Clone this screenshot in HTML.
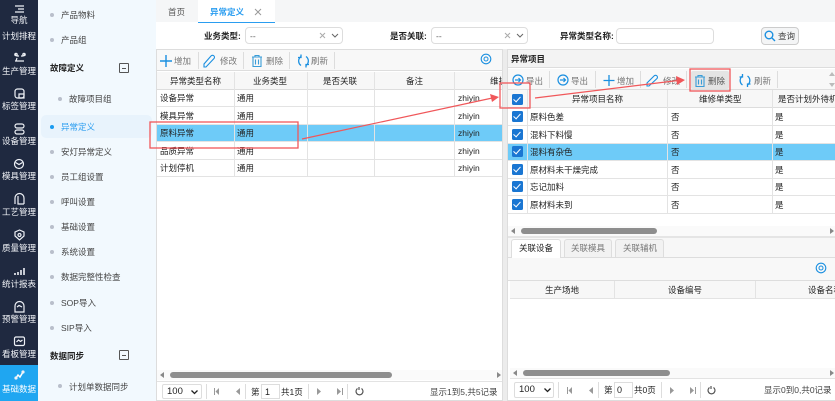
<!DOCTYPE html>
<html><head><meta charset="utf-8">
<style>
html,body{margin:0;padding:0;background:#fff}
#w{position:absolute;left:0;top:0;width:835px;height:401px;overflow:hidden;background:#fff;font-family:"Liberation Sans","Noto Sans CJK SC",sans-serif;font-size:8.5px;color:#222;filter:blur(.3px)}
body{width:835px;height:401px;overflow:hidden;position:relative}
#w div,#w span{position:absolute;white-space:nowrap;box-sizing:border-box}
svg{position:absolute;overflow:visible}
.t{line-height:12px;height:12px}
#w .nav{left:0;width:38px;text-align:center;color:#f2f4f8;font-size:8.5px;line-height:12px;height:12px}
.m{color:#444;font-size:8.5px;line-height:12px;height:12px}
.d{width:4px;height:4px;border-radius:50%;background:#b9bfcb}
.b{font-weight:bold;color:#222}
#w .r{left:0;right:0;height:1px;background:#e3e3e3}
#w .c{top:0;bottom:0;width:1px;background:#e3e3e3}
.cb{width:11px;height:11px;background:#1a76d2;border-radius:1.5px}
#w .cb:after{content:"";position:absolute;left:3.4px;top:1.4px;width:3px;height:6px;border:solid #fff;border-width:0 1.5px 1.5px 0;transform:rotate(42deg)}
.g{color:#777}
.sep{width:1px;background:#ddd}
</style></head><body><div id="w">

<!-- dark sidebar -->
<div style="left:0;top:0;width:38px;height:401px;background:#1f2940"></div>
<div style="left:0;top:365px;width:38px;height:36px;background:#1fa6f1"></div>
<svg style="left:0;top:0" width="38" height="401" fill="none" stroke="#eef1f6" stroke-width="1.200">
<path d="M15 6h9M18 9h6M15 12h9"/>
<path d="M15 54l2 2h2M25 54l-2 2h-2M19 56v0M15 61h9M17 58l-1 3"/><circle cx="16" cy="54.500" r="1.200"/><circle cx="24" cy="54.500" r="1.200"/>
<rect x="15" y="89" width="9" height="9" rx="2.500"/><path d="M19 94h5v4h-5z"/>
<rect x="15" y="124" width="9" height="4" rx="2"/><rect x="15" y="130" width="9" height="4" rx="2"/>
<circle cx="19" cy="164" r="4.500"/><path d="M15.500 162.500l3.500 2 3.500-2"/>
<path d="M15 204v-6a4.500 4.500 0 0 1 9 0v6M18 196v8h6"/>
<path d="M15 232l4.500-2 4.500 2v4l-4.500 4-4.500-4z"/><circle cx="19.500" cy="235" r="1.500"/>
<path d="M15 275v-2M18 275v-3M21 275v-5M24 275v-7" stroke-width="1.600"/>
<path d="M15 306a4.500 4.500 0 0 1 9 0v6h-9z"/><path d="M17 307l2-1.500 3 1.500"/>
<rect x="14.500" y="337" width="10" height="8.500" rx="1.500"/><path d="M16.500 342l2-2 2 1.500 2-1.500"/>
<path d="M16 378l2-3 2 2 3-5" stroke="#fff" stroke-width="1.500"/><circle cx="16" cy="378" r="1" fill="#fff"/><circle cx="23" cy="372" r="1" fill="#fff"/>
</svg>
<div class="nav" style="top:14px">导航</div>
<div class="nav" style="top:30px">计划排程</div>
<div class="nav" style="top:65px">生产管理</div>
<div class="nav" style="top:100px">标签管理</div>
<div class="nav" style="top:135px">设备管理</div>
<div class="nav" style="top:170px">模具管理</div>
<div class="nav" style="top:206px">工艺管理</div>
<div class="nav" style="top:242px">质量管理</div>
<div class="nav" style="top:278px">统计报表</div>
<div class="nav" style="top:313px">预警管理</div>
<div class="nav" style="top:348px">看板管理</div>
<div class="nav" style="top:383px;color:#fff">基础数据</div>

<!-- second menu -->
<div style="left:38px;top:0;width:118px;height:401px;background:#f2f9fe"></div>
<div style="left:41px;top:115px;width:111px;height:23px;background:#e8f3fc;border-radius:5px"></div>
<div class="d" style="left:50px;top:13px"></div><div class="m" style="left:61px;top:9px">产品物料</div>
<div class="d" style="left:50px;top:38px"></div><div class="m" style="left:61px;top:34px">产品组</div>
<div class="t b" style="left:50px;top:62px">故障定义</div>
<div class="d" style="left:58px;top:97px"></div><div class="m" style="left:69px;top:93px">故障项目组</div>
<div class="d" style="left:50px;top:125px;background:#1a9bf0"></div><div class="m" style="left:61px;top:121px;color:#2a9df0">异常定义</div>
<div class="d" style="left:50px;top:150px"></div><div class="m" style="left:61px;top:146px">安灯异常定义</div>
<div class="d" style="left:50px;top:175px"></div><div class="m" style="left:61px;top:171px">员工组设置</div>
<div class="d" style="left:50px;top:200px"></div><div class="m" style="left:61px;top:196px">呼叫设置</div>
<div class="d" style="left:50px;top:225px"></div><div class="m" style="left:61px;top:221px">基础设置</div>
<div class="d" style="left:50px;top:250px"></div><div class="m" style="left:61px;top:246px">系统设置</div>
<div class="d" style="left:50px;top:275px"></div><div class="m" style="left:61px;top:271px">数据完整性检查</div>
<div class="d" style="left:50px;top:301px"></div><div class="m" style="left:61px;top:297px">SOP导入</div>
<div class="d" style="left:50px;top:326px"></div><div class="m" style="left:61px;top:322px">SIP导入</div>
<div class="t b" style="left:50px;top:350px">数据同步</div>
<div class="d" style="left:58px;top:384px"></div><div class="m" style="left:69px;top:381px">计划单数据同步</div>
<div style="left:119px;top:63px;width:10px;height:10px;border:1.2px solid #555;border-radius:1px"></div><div style="left:122px;top:67.500px;width:4px;height:1.200px;background:#555"></div>
<div style="left:119px;top:350px;width:10px;height:10px;border:1.2px solid #555;border-radius:1px"></div><div style="left:122px;top:354.500px;width:4px;height:1.200px;background:#555"></div>

<!-- tabs -->
<div style="left:156px;top:0;width:679px;height:401px;background:#fff"></div>
<div style="left:156px;top:0;width:679px;height:22px;background:#f5f6f7"></div>
<div style="left:198px;top:0;width:77px;height:23px;background:#fff;border-bottom:1.5px solid #2a9df0"></div>
<div class="t" style="left:168px;top:6px;color:#555">首页</div>
<div class="t" style="left:210px;top:6px;color:#2a9df0;font-weight:bold">异常定义</div>
<svg style="left:254px;top:8px" width="9" height="9" stroke="#999" stroke-width="1" fill="none"><path d="M1 1l6 6M7 1l-6 6"/></svg>

<!-- filter row -->
<div class="t b" style="left:204px;top:30px">业务类型:</div>
<div style="left:245px;top:27px;width:98px;height:17px;border:1px solid #ddd;border-radius:4px;background:#fff"></div>
<div class="t" style="left:250px;top:30px;color:#555">--</div>
<svg style="left:319px;top:32px" width="22" height="8" stroke="#aaa" fill="none"><path d="M1 1l5 5M6 1l-5 5"/><path stroke="#666" d="M13 2l3 3 3-3"/></svg>
<div class="t b" style="left:390px;top:30px">是否关联:</div>
<div style="left:431px;top:27px;width:97px;height:17px;border:1px solid #ddd;border-radius:4px;background:#fff"></div>
<div class="t" style="left:436px;top:30px;color:#555">--</div>
<svg style="left:504px;top:32px" width="22" height="8" stroke="#aaa" fill="none"><path d="M1 1l5 5M6 1l-5 5"/><path stroke="#666" d="M13 2l3 3 3-3"/></svg>
<div class="t b" style="left:560px;top:30px">异常类型名称:</div>
<div style="left:616px;top:28px;width:98px;height:16px;border:1px solid #ddd;border-radius:4px;background:#fff"></div>
<div style="left:761px;top:27px;width:38px;height:18px;border:1px solid #ccc;border-radius:4px;background:#f4f5f6"></div>
<svg style="left:764px;top:30px" width="12" height="12" fill="none" stroke="#1a8fe0" stroke-width="1.400"><circle cx="5" cy="5" r="3.800"/><path d="M8 8l3 3"/></svg>
<div class="t" style="left:778px;top:30px;color:#444">查询</div>

<!-- gutter -->
<div style="left:502px;top:49px;width:6px;height:352px;background:#ececec"></div>

<!-- LEFT panel -->
<div style="left:156px;top:49px;width:347px;height:352px;border:1px solid #ddd;background:#fff"></div>
<div style="left:157px;top:50px;width:345px;height:21px;background:#f8f8f8;border-bottom:1px solid #ddd"></div>
<svg style="left:160px;top:54px" width="330" height="14" fill="none" stroke="#1a8fe0" stroke-width="1.300">
<path d="M6 1v12M0 7h12" stroke-width="1.400"/>
<path d="M46 13h-2v-3l7-8a1.500 1.500 0 0 1 3 2.500z" stroke-width="1.100"/>
<path d="M92 3h10M95 3v-1.500h4V3M93 3.500v9h8v-9M95.500 5.500v5M98.500 5.500v5" stroke="#3a9dd8" stroke-width="1.100"/>
<path d="M141 2.500a5.500 5.500 0 0 0 0 9M146 2.500a5.500 5.500 0 0 1 0 9M141 0.500v3h-3M146 13.500v-3h3" stroke-width="1.300"/>
<circle cx="326" cy="5" r="4.800" stroke-width="1.100"/><circle cx="326" cy="5" r="2" stroke-width="1"/>
</svg>
<div class="t g" style="left:174px;top:55px">增加</div>
<div class="t g" style="left:220px;top:55px">修改</div>
<div class="t g" style="left:266px;top:55px">删除</div>
<div class="t g" style="left:311px;top:55px">刷新</div>
<div class="sep" style="left:198px;top:52px;height:17px"></div>
<div class="sep" style="left:243px;top:52px;height:17px"></div>
<div class="sep" style="left:289px;top:52px;height:17px"></div>
<div class="sep" style="left:334px;top:52px;height:17px"></div>

<!-- left grid -->
<div style="left:157px;top:72px;width:345px;height:18px;background:#f7f7f7;border-bottom:1px solid #ddd"></div>
<div style="left:157px;top:124px;width:345px;height:18px;background:#6ecbf8"></div>
<div class="r" style="left:157px;right:333px;top:106px"></div>
<div class="r" style="left:157px;right:333px;top:124px"></div>
<div class="r" style="left:157px;right:333px;top:141px"></div>
<div class="r" style="left:157px;right:333px;top:159px"></div>
<div class="r" style="left:157px;right:333px;top:176px"></div>
<div class="c" style="left:234px;top:72px;bottom:auto;height:105px"></div>
<div class="c" style="left:307px;top:72px;bottom:auto;height:105px"></div>
<div class="c" style="left:374px;top:72px;bottom:auto;height:105px"></div>
<div class="c" style="left:454px;top:72px;bottom:auto;height:105px"></div>
<div class="t" style="left:170px;top:75px">异常类型名称</div>
<div class="t" style="left:253px;top:75px">业务类型</div>
<div class="t" style="left:323px;top:75px">是否关联</div>
<div class="t" style="left:406px;top:75px">备注</div>
<div class="t" style="left:490px;top:75px;width:12px;overflow:hidden">维护</div>
<div class="t" style="left:160px;top:92px">设备异常</div><div class="t" style="left:237px;top:92px">通用</div><div class="t" style="left:458px;top:92px">zhiyin</div>
<div class="t" style="left:160px;top:110px">模具异常</div><div class="t" style="left:237px;top:110px">通用</div><div class="t" style="left:458px;top:110px">zhiyin</div>
<div class="t" style="left:160px;top:127px">原料异常</div><div class="t" style="left:237px;top:127px">通用</div><div class="t" style="left:458px;top:127px">zhiyin</div>
<div class="t" style="left:160px;top:145px">品质异常</div><div class="t" style="left:237px;top:145px">通用</div><div class="t" style="left:458px;top:145px">zhiyin</div>
<div class="t" style="left:160px;top:162px">计划停机</div><div class="t" style="left:237px;top:162px">通用</div><div class="t" style="left:458px;top:162px">zhiyin</div>

<!-- left scroll -->
<div style="left:157px;top:370px;width:345px;height:10px;background:#fafafa"></div>
<div style="left:170px;top:372px;width:222px;height:6px;background:#8e8e8e;border-radius:3px"></div>
<svg style="left:160px;top:372px" width="340" height="6" fill="#888"><path d="M0 3l4-3v6zM337 0l4 3-4 3z"/></svg>
<!-- left pager -->
<div style="left:157px;top:381px;width:345px;height:1px;background:#e3e3e3"></div>
<div style="left:162px;top:384px;width:40px;height:15px;border:1px solid #ddd;border-radius:2px;background:#fff"></div>
<div class="t" style="left:167px;top:386px;font-size:9.500px;color:#222">100</div>
<svg style="left:191px;top:390px" width="7" height="5" fill="none" stroke="#222" stroke-width="1.300"><path d="M0.500 0.500l3 3 3-3"/></svg>
<div class="sep" style="left:206px;top:384px;height:15px"></div>
<svg style="left:214px;top:388px" width="30" height="8" fill="#999"><path d="M0 0h1v7H0zM5 0v7L1.500 3.500zM26 0v7l-4-3.500z"/></svg>
<div class="sep" style="left:245px;top:384px;height:15px"></div>
<div class="t" style="left:251px;top:386px">第</div>
<div style="left:261px;top:384px;width:19px;height:15px;border:1px solid #ddd;background:#fff"></div>
<div class="t" style="left:265px;top:386px;font-size:9px">1</div>
<div class="t" style="left:281px;top:386px">共1页</div>
<div class="sep" style="left:308px;top:384px;height:15px"></div>
<svg style="left:317px;top:388px" width="30" height="8" fill="#999"><path d="M0 0l4 3.500L0 7zM20 0l4 3.500L20 7zM25 0h1v7h-1z"/></svg>
<div class="sep" style="left:347px;top:384px;height:15px"></div>
<svg style="left:355px;top:387px" width="9" height="9" fill="none" stroke="#555" stroke-width="1.200"><path d="M6.500 1.500a3.500 3.500 0 1 1-4 0"/><path d="M4 0l0 3" /></svg>
<div class="t" style="left:430px;top:386px;color:#444">显示1到5,共5记录</div>

<!-- RIGHT panel -->
<div style="left:507px;top:49px;width:328px;height:352px;border:1px solid #ddd;border-right:0;background:#fff"></div>
<div style="left:508px;top:50px;width:327px;height:18px;background:#f3f3f3;border-bottom:1px solid #ddd"></div>
<div class="t b" style="left:511px;top:53px">异常项目</div>
<div style="left:508px;top:69px;width:327px;height:21px;background:#f8f8f8;border-bottom:1px solid #ddd"></div>
<div style="left:691px;top:71px;width:38px;height:18px;background:#e4e4e4;border-radius:2px"></div>
<svg style="left:511px;top:74px" width="320" height="14" fill="none" stroke="#1a8fe0" stroke-width="1.200">
<circle cx="7" cy="6" r="5"/><path d="M4 6h5M7.500 4l2 2-2 2" />
<circle cx="52" cy="6" r="5"/><path d="M49 6h5M52.500 4l2 2-2 2"/>
<path d="M98 1v11M92.500 6.500h11" stroke-width="1.300"/>
<path d="M138 12h-2v-3l7-7a1.500 1.500 0 0 1 3 2.500z" stroke-width="1.100"/>
<path d="M184 3h10M187 3v-1.500h4V3M185 3.500v9h8v-9M187.500 5.500v5M190.500 5.500v5" stroke="#3a9dd8" stroke-width="1.100"/>
<path d="M231.500 2a5.500 5.500 0 0 0 0 9M236.500 2a5.500 5.500 0 0 1 0 9M231.500 0v3h-3M236.500 13v-3h3" stroke-width="1.300"/>
</svg>
<div class="t g" style="left:526px;top:75px">导出</div>
<div class="t g" style="left:571px;top:75px">导出</div>
<div class="t g" style="left:617px;top:75px">增加</div>
<div class="t g" style="left:663px;top:75px">修改</div>
<div class="t" style="left:708px;top:75px;color:#555">删除</div>
<div class="t g" style="left:754px;top:75px">刷新</div>
<div class="sep" style="left:549px;top:71px;height:17px"></div>
<div class="sep" style="left:595px;top:71px;height:17px"></div>
<div class="sep" style="left:640px;top:71px;height:17px"></div>
<div class="sep" style="left:686px;top:71px;height:17px"></div>
<div class="sep" style="left:777px;top:71px;height:17px"></div>
<svg style="left:829px;top:72px" width="6" height="16" fill="#bbb"><path d="M3 0l3 4H0zM0 11h6l-3 4z"/></svg>

<!-- right grid -->
<div style="left:508px;top:90px;width:327px;height:18px;background:#f7f7f7;border-bottom:1px solid #ddd"></div>
<div style="left:508px;top:143px;width:327px;height:17px;background:#6ecbf8"></div>
<div class="r" style="left:508px;top:125px"></div>
<div class="r" style="left:508px;top:143px"></div>
<div class="r" style="left:508px;top:160px"></div>
<div class="r" style="left:508px;top:178px"></div>
<div class="r" style="left:508px;top:195px"></div>
<div class="r" style="left:508px;top:213px"></div>
<div class="c" style="left:527px;top:90px;bottom:auto;height:123px"></div>
<div class="c" style="left:667px;top:90px;bottom:auto;height:123px"></div>
<div class="c" style="left:772px;top:90px;bottom:auto;height:123px"></div>
<div class="cb" style="left:512px;top:94px"></div>
<div class="cb" style="left:512px;top:111px"></div>
<div class="cb" style="left:512px;top:129px"></div>
<div class="cb" style="left:512px;top:146px"></div>
<div class="cb" style="left:512px;top:164px"></div>
<div class="cb" style="left:512px;top:181px"></div>
<div class="cb" style="left:512px;top:199px"></div>
<div class="t" style="left:572px;top:93px">异常项目名称</div>
<div class="t" style="left:699px;top:93px">维修单类型</div>
<div class="t" style="left:778px;top:93px">是否计划外待机</div>
<div class="t" style="left:530px;top:111px">原料色差</div><div class="t" style="left:671px;top:111px">否</div><div class="t" style="left:775px;top:111px">是</div>
<div class="t" style="left:530px;top:129px">混料下料慢</div><div class="t" style="left:671px;top:129px">否</div><div class="t" style="left:775px;top:129px">是</div>
<div class="t" style="left:530px;top:146px">混料有杂色</div><div class="t" style="left:671px;top:146px">否</div><div class="t" style="left:775px;top:146px">是</div>
<div class="t" style="left:530px;top:164px">原材料未干燥完成</div><div class="t" style="left:671px;top:164px">否</div><div class="t" style="left:775px;top:164px">是</div>
<div class="t" style="left:530px;top:181px">忘记加料</div><div class="t" style="left:671px;top:181px">否</div><div class="t" style="left:775px;top:181px">是</div>
<div class="t" style="left:530px;top:199px">原材料未到</div><div class="t" style="left:671px;top:199px">否</div><div class="t" style="left:775px;top:199px">是</div>

<!-- right upper scroll -->
<div style="left:508px;top:226px;width:327px;height:10px;background:#fafafa"></div>
<div style="left:521px;top:228px;width:136px;height:6px;background:#8e8e8e;border-radius:3px"></div>
<svg style="left:511px;top:228px" width="324" height="6" fill="#888"><path d="M0 3l4-3v6zM319 0l4 3-4 3z"/></svg>
<div style="left:508px;top:236px;width:327px;height:2px;background:#e5e5e5"></div>

<!-- bottom tabs -->
<div style="left:508px;top:238px;width:327px;height:20px;background:#f7f7f7;border-bottom:1px solid #ddd"></div>
<div style="left:511px;top:239px;width:50px;height:20px;background:#fff;border:1px solid #ddd;border-bottom:0;border-radius:3px 3px 0 0"></div>
<div style="left:564px;top:239px;width:48px;height:18px;background:#f2f2f2;border:1px solid #ddd;border-bottom:0;border-radius:3px 3px 0 0"></div>
<div style="left:615px;top:239px;width:49px;height:18px;background:#f2f2f2;border:1px solid #ddd;border-bottom:0;border-radius:3px 3px 0 0"></div>
<div class="t" style="left:519px;top:242px">关联设备</div>
<div class="t g" style="left:571px;top:242px">关联模具</div>
<div class="t g" style="left:623px;top:242px">关联辅机</div>
<div style="left:508px;top:258px;width:327px;height:23px;background:#f8f8f8;border-bottom:1px solid #ddd"></div>
<svg style="left:815px;top:262px" width="12" height="12" fill="none" stroke="#1a8fe0"><circle cx="6" cy="6" r="4.800" stroke-width="1.100"/><circle cx="6" cy="6" r="2"/></svg>
<div style="left:510px;top:281px;width:325px;height:18px;background:#f7f7f7;border-bottom:1px solid #e3e3e3"></div>
<div class="c" style="left:614px;top:281px;bottom:auto;height:18px"></div>
<div class="c" style="left:755px;top:281px;bottom:auto;height:18px"></div>
<div class="t" style="left:545px;top:284px">生产场地</div>
<div class="t" style="left:668px;top:284px">设备编号</div>
<div class="t" style="left:808px;top:284px">设备名称</div>

<!-- right lower scroll -->
<div style="left:510px;top:368px;width:325px;height:10px;background:#fafafa"></div>
<div style="left:523px;top:370px;width:147px;height:6px;background:#8e8e8e;border-radius:3px"></div>
<svg style="left:513px;top:370px" width="322" height="6" fill="#888"><path d="M0 3l4-3v6zM317 0l4 3-4 3z"/></svg>
<div style="left:510px;top:378px;width:325px;height:1px;background:#e3e3e3"></div>
<!-- right pager -->
<div style="left:514px;top:382px;width:40px;height:16px;border:1px solid #ddd;border-radius:2px;background:#fff"></div>
<div class="t" style="left:519px;top:384px;font-size:9.500px;color:#222">100</div>
<svg style="left:544px;top:388px" width="7" height="5" fill="none" stroke="#222" stroke-width="1.300"><path d="M0.500 0.500l3 3 3-3"/></svg>
<div class="sep" style="left:558px;top:382px;height:16px"></div>
<svg style="left:567px;top:387px" width="30" height="8" fill="#999"><path d="M0 0h1v7H0zM5 0v7L1.500 3.500zM26 0v7l-4-3.500z"/></svg>
<div class="sep" style="left:598px;top:382px;height:16px"></div>
<div class="t" style="left:604px;top:384px">第</div>
<div style="left:614px;top:382px;width:19px;height:16px;border:1px solid #ddd;background:#fff"></div>
<div class="t" style="left:617px;top:384px;font-size:9px">0</div>
<div class="t" style="left:634px;top:384px">共0页</div>
<div class="sep" style="left:661px;top:382px;height:16px"></div>
<svg style="left:670px;top:387px" width="30" height="8" fill="#999"><path d="M0 0l4 3.500L0 7zM20 0l4 3.500L20 7zM25 0h1v7h-1z"/></svg>
<div class="sep" style="left:700px;top:382px;height:16px"></div>
<svg style="left:707px;top:386px" width="9" height="9" fill="none" stroke="#555" stroke-width="1.200"><path d="M6.500 1.500a3.500 3.500 0 1 1-4 0"/><path d="M4 0l0 3"/></svg>
<div class="t" style="left:764px;top:384px;color:#444">显示0到0,共0记录</div>

<!-- red annotations -->
<svg style="left:0;top:0" width="835" height="401" fill="none" stroke="#f0575a">
<rect x="150" y="122" width="148" height="26" stroke-width="1.300"/>
<rect x="500" y="83" width="30" height="25" stroke-width="1.300"/>
<rect x="690" y="69" width="40" height="22" stroke-width="1.300"/>
<path d="M302 139L497 97" stroke-width="1.200"/><path d="M490 94l9 3-7 5z" fill="#f0575a" stroke="none"/>
<path d="M535 98L682 80" stroke-width="1.200"/><path d="M676 76l9 4-8 5z" fill="#f0575a" stroke="none"/>
</svg>
</div></body></html>
